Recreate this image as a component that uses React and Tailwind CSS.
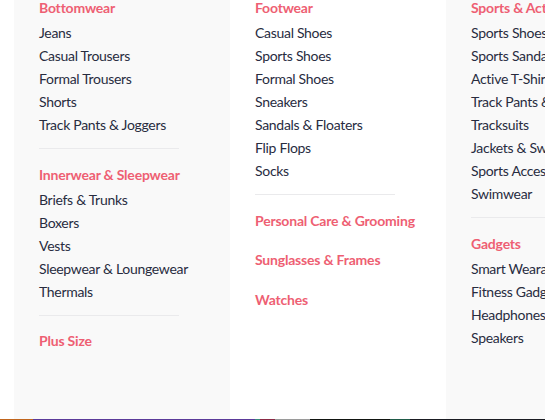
import React from "react";

const cols = [
  {
    bg: "bg-[#f9f9f9]",
    sections: [
      { title: "Bottomwear", items: ["Jeans", "Casual Trousers", "Formal Trousers", "Shorts", "Track Pants & Joggers"], divider: true },
      { title: "Innerwear & Sleepwear", items: ["Briefs & Trunks", "Boxers", "Vests", "Sleepwear & Loungewear", "Thermals"], divider: true },
      { title: "Plus Size", items: [] },
    ],
  },
  {
    bg: "bg-white",
    sections: [
      { title: "Footwear", items: ["Casual Shoes", "Sports Shoes", "Formal Shoes", "Sneakers", "Sandals & Floaters", "Flip Flops", "Socks"], divider: true },
      { title: "Personal Care & Grooming", items: [] },
      { title: "Sunglasses & Frames", items: [] },
      { title: "Watches", items: [] },
    ],
  },
  {
    bg: "bg-[#f9f9f9]",
    sections: [
      { title: "Sports & Active Wear", items: ["Sports Shoes", "Sports Sandals", "Active T-Shirts", "Track Pants & Shorts", "Tracksuits", "Jackets & Sweatshirts", "Sports Accessories", "Swimwear"], divider: true },
      { title: "Gadgets", items: ["Smart Wearables", "Fitness Gadgets", "Headphones", "Speakers"] },
    ],
  },
];

function Section({ s }) {
  const empty = s.items.length === 0;
  return (
    <div className={empty && !s.divider ? "mb-[13.5px]" : ""}>
      <div className="h-[26px] leading-[26px] text-[14px] font-bold tracking-[-0.2px] text-[#ee5f73] whitespace-nowrap">{s.title}</div>
      {s.items.map((it) => (
        <div key={it} className="h-[23px] leading-[23px] text-[14px] tracking-[-0.3px] text-[#282c3f] whitespace-nowrap">{it}</div>
      ))}
      {s.divider && <div className="mt-[12px] mb-[12.5px] h-px w-[140px] bg-[#eaeaec]" />}
    </div>
  );
}

export default function App() {
  return (
    <div className="w-[545px] h-[420px] overflow-hidden bg-white flex flex-col" style={{ fontFamily: "Lato, 'Noto Sans', sans-serif" }}>
      <div className="flex-1 flex pl-[14px] overflow-hidden">
        {cols.map((c, i) => (
          <div key={i} className={`w-[216px] shrink-0 h-full pl-[25px] overflow-hidden ${c.bg}`}>
            <div className="-mt-[5px]">
              {c.sections.map((s) => (
                <Section key={s.title} s={s} />
              ))}
            </div>
          </div>
        ))}
      </div>
      <div className="h-px flex shrink-0">
        <div className="w-[33px] bg-[#c0651d]" />
        <div className="w-[222px] bg-[#5b3a9a]" />
        <div className="w-[5px] bg-[#3a8a7a]" />
        <div className="w-[15px] bg-[#8a2a45]" />
        <div className="w-[35px] bg-[#9a9a9a]" />
        <div className="w-[80px] bg-[#111411]" />
        <div className="w-[20px] bg-[#1f5a48]" />
        <div className="flex-1 bg-[#1a1c22]" />
      </div>
    </div>
  );
}
